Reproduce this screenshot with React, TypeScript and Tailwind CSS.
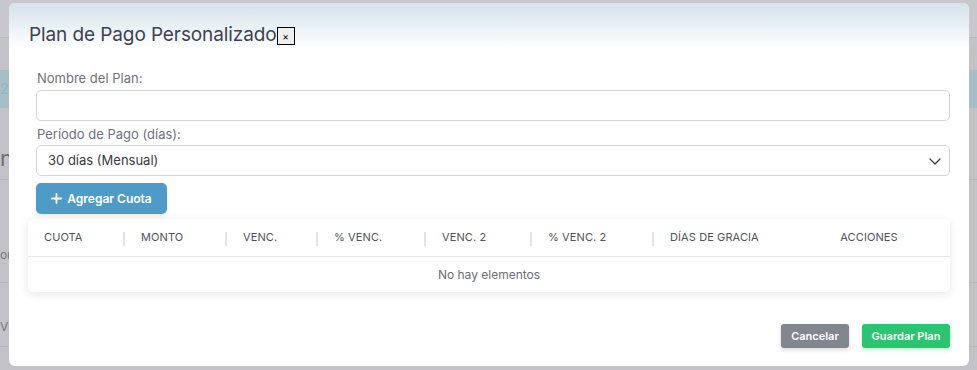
import React from "react";

const cols = [
  { label: "CUOTA", w: 97, div: true, align: "left" },
  { label: "MONTO", w: 102, div: true, align: "left" },
  { label: "VENC.", w: 91, div: true, align: "left" },
  { label: "% VENC.", w: 108, div: true, align: "left" },
  { label: "VENC. 2", w: 106, div: true, align: "left" },
  { label: "% VENC. 2", w: 122, div: true, align: "left" },
  { label: "DÍAS DE GRACIA", w: 134, div: false, align: "left" },
  { label: "ACCIONES", w: 162, div: false, align: "center" },
];

export default function App() {
  return (
    <div
      className="relative w-[977px] h-[370px] overflow-hidden bg-[#c3c2c8]"
      style={{ fontFamily: "Inter, 'Noto Sans', sans-serif" }}
    >
      {/* dimmed background page */}
      <div className="flex flex-col w-full h-full">
        <div className="h-[38px] bg-[#c8c7cc] border-b border-[#b8b7bd]" />
        <div className="h-[32px]" />
        <div className="h-[38px] bg-[#a7bec6] text-[#8fb4c3] text-[14px] leading-[38px] pl-[0px]">20</div>
        <div className="h-[72px] border-b border-[#b8b7bd] text-[#6e6e74] text-[22px] leading-[100px] pl-[0px]">n</div>
        <div className="h-[20px] relative">
          <div className="absolute left-[16px] top-[18px] w-[8px] h-[2px] bg-[#7fa6bf]" />
        </div>
        <div className="h-[83px] border-b border-[#b8b7bd] text-[#77767c] text-[12px] leading-[110px] pl-[0px]">on</div>
        <div className="h-[64px] border-b border-[#b8b7bd] text-[#77767c] text-[12px] leading-[88px] pl-[0px]">VE</div>
      </div>

      {/* modal */}
      <div className="absolute left-[9px] top-[3px] w-[960px] h-[363px] bg-white rounded-[6px] overflow-hidden flex flex-col">
        <div className="h-[46px] bg-gradient-to-b from-[#d4e2ea] to-[#ffffff] flex items-end pl-[20px] pb-[1px]">
          <span className="text-[19px] leading-[26px] text-[#3e4152] tracking-[-0.1px]">Plan de Pago Personalizado</span>
          <button className="mb-[3px] w-[18px] h-[18px] border border-black bg-[#efefef] text-[10px] leading-[14px] text-black flex items-center justify-center">×</button>
        </div>
        <div className="pl-[27px] pr-[19px] pt-[21px] flex flex-col">
          <label className="text-[13px] leading-[16px] text-[#6f717c] mb-[4px] ml-[1px]">Nombre del Plan:</label>
          <input className="h-[31px] w-full border border-[#d4d4d8] rounded-[5px] outline-none" />
          <label className="text-[13px] leading-[16px] text-[#6f717c] mt-[5px] mb-[3px] ml-[1px]">Período de Pago (días):</label>
          <div className="h-[31px] w-full border border-[#d4d4d8] rounded-[5px] flex items-center justify-between pl-[11px] pr-[7px]">
            <span className="text-[13px] text-[#3a3b44]">30 días (Mensual)</span>
            <svg width="14" height="14" viewBox="0 0 14 14" fill="none">
              <path d="M2 5 L7 10 L12 5" stroke="#3a3b44" strokeWidth="1.3" strokeLinecap="round" strokeLinejoin="round" />
            </svg>
          </div>
          <button className="mt-[7px] w-[131px] h-[31px] rounded-[5px] bg-[#4f9bc7] text-white text-[12px] font-semibold flex items-center justify-center gap-[5px] shadow-[0_2px_4px_rgba(0,0,0,0.08)]">
            <svg width="11" height="11" viewBox="0 0 11 11">
              <path d="M5.5 1 V10 M1 5.5 H10" stroke="white" strokeWidth="1.8" strokeLinecap="round" />
            </svg>
            Agregar Cuota
          </button>
        </div>
        <div className="mx-[19px] mt-[5px] w-[922px] rounded-[5px] bg-white shadow-[0_2px_10px_rgba(0,0,0,0.1)]">
          <div className="flex h-[38px] border-b border-[#e6e6ea] items-center">
            {cols.map((c) => (
              <div
                key={c.label}
                className={
                  "relative h-full flex items-center text-[11px] font-normal text-[#50525e] tracking-[0.1px] " +
                  (c.align === "center" ? "justify-center" : "pl-[16px]")
                }
                style={{ width: c.w }}
              >
                {c.label}
                {c.div && <div className="absolute right-[0px] top-[13px] w-[2px] h-[14px] bg-[#e3e3e7]" />}
              </div>
            ))}
          </div>
          <div className="h-[35px] flex items-center justify-center text-[12px] text-[#6b6d78]">No hay elementos</div>
        </div>
        <div className="flex justify-end gap-[13px] pr-[19px] mt-[32px]">
          <button className="h-[24px] w-[68px] rounded-[3px] bg-[#82868f] text-white text-[11px] font-semibold shadow-[0_2px_4px_rgba(0,0,0,0.15)]">Cancelar</button>
          <button className="h-[24px] w-[88px] rounded-[3px] bg-[#28c76f] text-white text-[11px] font-semibold shadow-[0_2px_4px_rgba(40,199,111,0.3)]">Guardar Plan</button>
        </div>
      </div>
    </div>
  );
}
